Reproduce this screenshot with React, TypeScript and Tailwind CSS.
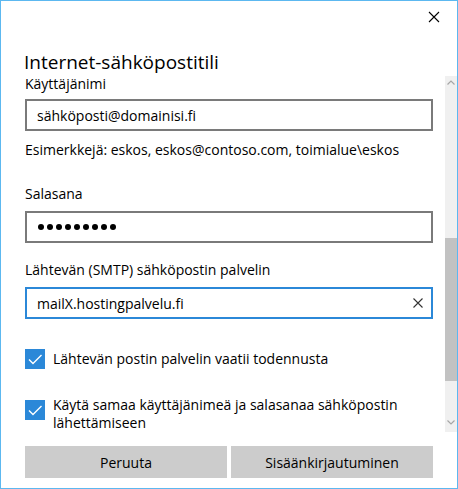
import React from 'react'

const Label: React.FC<{ children: React.ReactNode; className?: string }> = ({ children, className = '' }) => (
    <div className={`text-[14px] leading-[20px] text-black ${className}`}>{children}</div>
)

const Box: React.FC<{ className?: string }> = ({ className = '' }) => (
    <div className={`w-[20px] h-[20px] shrink-0 bg-[#2b88d8] flex items-center justify-center ${className}`}>
        <svg width="20" height="20" viewBox="0 0 20 20" fill="none">
            <path d="M4 10.5 L8 14.5 L16.5 6" stroke="white" strokeWidth="1.4" />
        </svg>
    </div>
)

const App: React.FC = () => {
    return (
        <div className="w-[458px] h-[489px] border border-[#5cb8f0] bg-white flex flex-col font-['Open_Sans',sans-serif] text-black overflow-hidden">
            {/* header */}
            <div className="h-[49px] shrink-0 flex justify-end pr-[17px] pt-[10px]">
                <svg width="12" height="12" viewBox="0 0 12 12" fill="none">
                    <path d="M1 1 L11 11 M11 1 L1 11" stroke="#000" strokeWidth="1.1" />
                </svg>
            </div>
            <div className="h-[26px] shrink-0 pl-[23px] text-[19px] leading-[24px] font-normal">
                Internet-sähköpostitili
            </div>

            {/* scroll area */}
            <div className="h-[356px] shrink-0 flex">
                <div className="flex-1 pl-[24px] pr-[12px]">
                    <div className="flex flex-col">
                        <div className="text-[14px] leading-[16px]">Käyttäjänimi</div>
                        <div className="mt-[7px] h-[32px] border-2 border-[#7a7a7a] flex items-center px-[10px] text-[14px]">
                            sähköposti@domainisi.fi
                        </div>
                        <Label className="mt-[9px]">Esimerkkejä: eskos, eskos@contoso.com, toimialue\eskos</Label>
                        <Label className="mt-[24px]">Salasana</Label>
                        <div className="mt-[7px] h-[32px] border-2 border-[#7a7a7a] flex items-center gap-[3px] px-[11px]">
                            {Array.from({ length: 9 }).map((_, i) => (
                                <span key={i} className="w-[6px] h-[6px] rounded-full bg-black" />
                            ))}
                        </div>
                        <Label className="mt-[17px]">Lähtevän (SMTP) sähköpostin palvelin</Label>
                        <div className="mt-[7px] h-[32px] border-2 border-[#2b88d8] flex items-center justify-between pl-[10px] pr-[8px] text-[14px]">
                            <span>mailX.hostingpalvelu.fi</span>
                            <svg width="10" height="10" viewBox="0 0 10 10" fill="none">
                                <path d="M0.5 0.5 L9.5 9.5 M9.5 0.5 L0.5 9.5" stroke="#333" strokeWidth="1.1" />
                            </svg>
                        </div>
                        <div className="mt-[30px] flex items-center gap-[8px]">
                            <Box />
                            <span className="text-[14px] leading-[20px]">Lähtevän postin palvelin vaatii todennusta</span>
                        </div>
                        <div className="mt-[27px] flex items-start gap-[8px]">
                            <Box className="mt-[4px]" />
                            <span className="text-[14px] leading-[18px]">
                                Käytä samaa käyttäjänimeä ja salasanaa sähköpostin lähettämiseen
                            </span>
                        </div>
                    </div>
                </div>

                {/* scrollbar */}
                <div className="w-[12px] shrink-0 bg-[#f0f0f0] flex flex-col items-center">
                    <div className="h-[12px] flex items-center justify-center">
                        <svg width="8" height="5" viewBox="0 0 8 5" fill="none">
                            <path d="M0.5 4.5 L4 1 L7.5 4.5" stroke="#a6a6a6" strokeWidth="1.2" />
                        </svg>
                    </div>
                    <div className="h-[150px]" />
                    <div className="w-full h-[143px] bg-[#c2c2c2]" />
                    <div className="flex-1" />
                    <div className="h-[16px] flex items-start justify-center pt-[4px]">
                        <svg width="8" height="5" viewBox="0 0 8 5" fill="none">
                            <path d="M0.5 0.5 L4 4 L7.5 0.5" stroke="#a6a6a6" strokeWidth="1.2" />
                        </svg>
                    </div>
                </div>
            </div>

            {/* footer */}
            <div className="flex gap-[4px] pl-[24px] pr-[24px] pt-[14px]">
                <button className="flex-1 h-[32px] bg-[#cccccc] text-[14px] text-black">Peruuta</button>
                <button className="flex-1 h-[32px] bg-[#cccccc] text-[14px] text-black">Sisäänkirjautuminen</button>
            </div>
        </div>
    )
}

export default App
